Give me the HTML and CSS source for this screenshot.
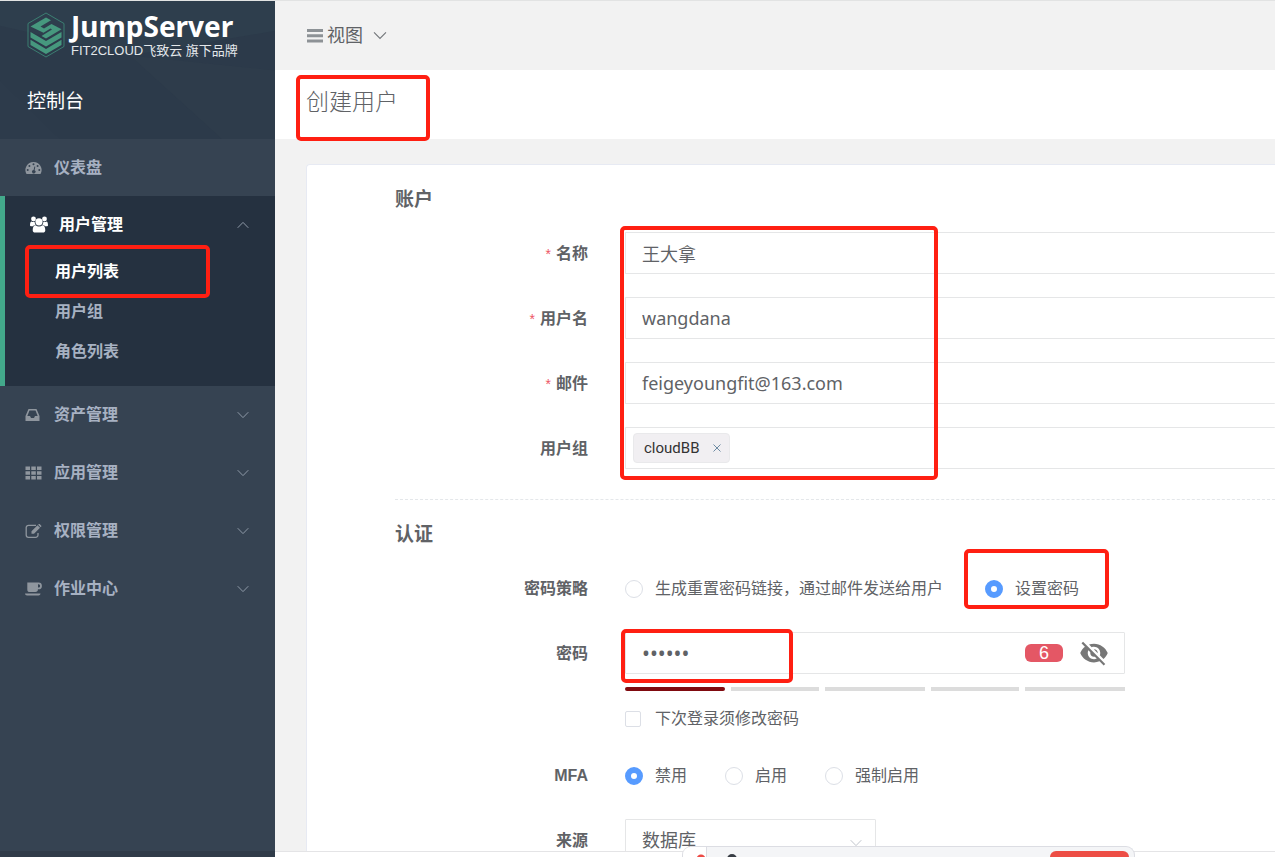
FILE: index.html
```html
<!DOCTYPE html>
<html lang="zh-CN">
<head>
<meta charset="utf-8">
<title>创建用户 - JumpServer</title>
<link rel="stylesheet" href="styles.css">
</head>
<body>
<svg class="symbols" aria-hidden="true">
  <symbol id="chevron" viewBox="0 0 12 8"><path d="M.7 1.2 6 6.6l5.300-5.400" fill="none" stroke="currentColor"/></symbol>
</svg>
<div class="app">
  <aside class="sidebar">
    <header class="brand">
      <svg class="facets" viewBox="0 0 275 139" preserveAspectRatio="none" aria-hidden="true">
        <path d="M0 0H275V30L130 55 0 25z" fill="#2e3e4d"/>
        <path d="M130 55 222 139H275V70z" fill="#2e3c4b"/>
        <path d="M0 80 60 139H0z" fill="#2d3b4b"/>
      </svg>
      <div class="logo">
        <svg class="logo-mark" viewBox="0 0 38 46" aria-hidden="true">
          <path d="M19 1 37 11.500V34.500L19 45 1 34.500V11.500z" fill="none" stroke="#3f8f7b" stroke-width=".8"/>
          <path d="M3.500 14.500 19 5.500 24 8.300 13.500 14.500 17 16.500 24.500 12 34.500 17.300 19 26.500 14.500 23.900 25 17.500 23.500 16.600 16.500 20.800z" fill="#46987e"/>
          <path d="M3.500 20v5.500L19 34.500 34.500 25.500V20L19 29z" fill="#46987e"/>
          <path d="M3.500 27.800V33L19 42 34.500 33V27.800L19 37z" fill="#46987e"/>
        </svg>
        <div class="logo-text">
          <strong>JumpServer</strong>
          <span>FIT2CLOUD飞致云 旗下品牌</span>
        </div>
      </div>
      <div class="console">控制台</div>
    </header>
    <nav>
      <a class="item first" href="#">
        <svg class="icon" viewBox="0 0 16 14"><path fill-rule="evenodd" d="M8 1a8 8 0 0 0-7 12h14A8 8 0 0 0 8 1zM8 2.200a1 1 0 1 1 0 2 1 1 0 0 1 0-2zM3.900 3.900a1 1 0 1 1 0 2 1 1 0 0 1 0-2zM12.100 3.900a1 1 0 1 1 0 2 1 1 0 0 1 0-2zM2.200 8a1 1 0 1 1 0 2 1 1 0 0 1 0-2zM13.800 8a1 1 0 1 1 0 2 1 1 0 0 1 0-2zM8.900 5.500l.9.200-.7 3.500a1.700 1.700 0 1 1-1-.2z"/></svg>
        <span>仪表盘</span>
      </a>
      <section class="group">
        <a class="item open" href="#">
          <svg class="icon" viewBox="0 0 18 17"><circle cx="3.500" cy="3" r="2.400"/><circle cx="14.500" cy="3" r="2.400"/><path d="M0 9.500C0 7 .6 5.600 1.500 5.600c1 .7 2.500.6 3.200.2 0 1.300.3 2.200 1 3-1 .1-2 .6-2.600 1.400H1.500C.6 10.200 0 10 0 9.500zM18 9.500c0-2.500-.6-3.900-1.500-3.900-1 .7-2.500.6-3.200.2 0 1.300-.3 2.200-1 3 1 .1 2 .6 2.600 1.400h1.600c.9 0 1.500-.2 1.500-.7z"/><circle cx="9" cy="5.800" r="3.600"/><path d="M2.700 14.200c0-3 .9-5 2.900-5 2 1.600 4.800 1.600 6.800 0 2 0 2.900 2 2.900 5 0 1.600-1 2.400-2.400 2.400H5.100c-1.400 0-2.400-.8-2.400-2.400z"/></svg>
          <span>用户管理</span>
          <svg class="chev up"><use href="#chevron"/></svg>
        </a>
        <a class="sub current" href="#">用户列表</a>
        <a class="sub" href="#">用户组</a>
        <a class="sub" href="#">角色列表</a>
      </section>
      <a class="item" href="#">
        <svg class="icon" viewBox="0 0 16 14"><path fill-rule="evenodd" d="M3 1h8l3 7v5H0V8zM4 2.600 1.800 8H4.500l1 2h3l1-2h2.700L10 2.600z"/></svg>
        <span>资产管理</span><svg class="chev"><use href="#chevron"/></svg>
      </a>
      <a class="item" href="#">
        <svg class="icon" viewBox="0 0 16 14"><path d="M0 .5h4.500v3.500H0zM5.800.5h4.500v3.500H5.800zM11.500.5H16v3.500h-4.500zM0 5.200h4.500v3.500H0zM5.800 5.200h4.500v3.500H5.800zM11.500 5.200H16v3.500h-4.500zM0 10h4.500v3.500H0zM5.800 10h4.500v3.500H5.800zM11.500 10H16v3.500h-4.500z"/></svg>
        <span>应用管理</span><svg class="chev"><use href="#chevron"/></svg>
      </a>
      <a class="item" href="#">
        <svg class="icon" viewBox="0 0 16 14"><path d="M10.500 1.300H3A2.300 2.300 0 0 0 .7 3.600V11A2.300 2.300 0 0 0 3 13.300h7.200A2.300 2.300 0 0 0 12.500 11V9" fill="none" stroke="currentColor" stroke-width="1.300"/><path d="M6 7.200 12 1.300l2.500 2.500-6 5.900H6zM12.600.8l.5-.5c.4-.4.9-.4 1.300 0l1.200 1.200c.4.400.4.900 0 1.300l-.5.5z"/></svg>
        <span>权限管理</span><svg class="chev"><use href="#chevron"/></svg>
      </a>
      <a class="item" href="#">
        <svg class="icon" viewBox="0 0 17 14"><path fill-rule="evenodd" d="M2.300.5h11.200a3.400 3.400 0 0 1 0 6.800h-.6A2.600 2.600 0 0 1 10.300 10H4.900A2.600 2.600 0 0 1 2.300 7.400zM13 2.300v3.300h.5a1.650 1.650 0 0 0 0-3.300zM0 11.500h15.500c0 1.200-1 2-2 2H2c-1 0-2-.8-2-2z"/></svg>
        <span>作业中心</span><svg class="chev"><use href="#chevron"/></svg>
      </a>
    </nav>
  </aside>

  <main class="main">
    <div class="topbar">
      <button class="view" type="button">
        <svg class="bars" viewBox="0 0 16 14"><path d="M0 0h16v3H0zM0 5.300h16v3H0zM0 10.600h16v3H0z"/></svg>
        <span>视图</span>
        <svg class="chev"><use href="#chevron"/></svg>
      </button>
    </div>
    <div class="page-title"><h1>创建用户</h1></div>
    <form class="card">
      <h2>账户</h2>
      <div class="row"><label class="label required" for="name">名称</label><input class="field" id="name" type="text" value="王大拿"></div>
      <div class="row"><label class="label required" for="username">用户名</label><input class="field" id="username" type="text" value="wangdana"></div>
      <div class="row"><label class="label required" for="email">邮件</label><input class="field" id="email" type="text" value="feigeyoungfit@163.com"></div>
      <div class="row"><span class="label">用户组</span>
        <div class="field tags"><span class="tag">cloudBB<button type="button" aria-label="移除"><svg viewBox="0 0 8 8"><path d="m.5.5 7 7m0-7-7 7" fill="none" stroke="currentColor"/></svg></button></span></div>
      </div>
      <hr>
      <h2>认证</h2>
      <div class="row"><span class="label">密码策略</span>
        <div class="options strategy">
          <label><input type="radio" name="strategy">生成重置密码链接，通过邮件发送给用户</label>
          <label><input type="radio" name="strategy" checked>设置密码</label>
        </div>
      </div>
      <div class="row password-row"><label class="label" for="password">密码</label>
        <div class="password">
          <div class="field password-box">
            <input id="password" type="password" value="secret">
            <span class="count">6</span>
            <button type="button" aria-label="显示密码"><svg viewBox="0 0 24 24"><path d="M12 7c2.760 0 5 2.240 5 5 0 .65-.13 1.260-.36 1.830l2.920 2.920c1.510-1.260 2.700-2.890 3.430-4.750-1.730-4.390-6-7.500-11-7.500-1.400 0-2.740.25-3.980.7l2.160 2.160C10.740 7.130 11.350 7 12 7zM2 4.270l2.280 2.280.46.46C3.080 8.300 1.780 10.020 1 12c1.730 4.390 6 7.500 11 7.500 1.550 0 3.030-.3 4.380-.84l.42.42L19.730 22 21 20.730 3.270 3 2 4.270zM7.530 9.800l1.550 1.550c-.05.21-.08.43-.08.65 0 1.660 1.340 3 3 3 .22 0 .44-.03.65-.08l1.550 1.550c-.67.33-1.410.53-2.200.53-2.760 0-5-2.240-5-5 0-.79.2-1.530.53-2.200zm4.310-.78l3.150 3.150.02-.16c0-1.660-1.340-3-3-3l-.17.01z"/></svg></button>
          </div>
          <div class="strength"><i class="on"></i><i></i><i></i><i></i><i></i></div>
          <div class="options"><label><input type="checkbox">下次登录须修改密码</label></div>
        </div>
      </div>
      <div class="row"><span class="label">MFA</span>
        <div class="options">
          <label><input type="radio" name="mfa" checked>禁用</label>
          <label><input type="radio" name="mfa">启用</label>
          <label><input type="radio" name="mfa">强制启用</label>
        </div>
      </div>
      <div class="row"><label class="label" for="source">来源</label>
        <div class="select"><select class="field" id="source"><option>数据库</option></select><svg class="chev"><use href="#chevron"/></svg></div>
      </div>
    </form>
  </main>

  <footer class="status">
    <div class="dock"><span class="dock-tab"></span><span class="dock-body"><i class="dot"></i><i class="action"></i></span></div>
  </footer>
</div>
<div class="mark mark-title"></div>
<div class="mark mark-menu"></div>
<div class="mark mark-account"></div>
<div class="mark mark-strategy"></div>
<div class="mark mark-password"></div>
</body>
</html>
```
FILE: styles.css
```css
* { box-sizing: border-box; }
body {
  margin: 0;
  color: #606266;
  font: 16px/24px "Liberation Sans", "Noto Sans CJK SC", sans-serif;
}
a { color: inherit; text-decoration: none; }
button { padding: 0; border: 0; background: none; color: inherit; font: inherit; }
.symbols { display: none; }
.app {
  display: grid;
  grid-template: minmax(0, 1fr) 6px / 275px minmax(0, 1fr);
  height: 100vh;
  overflow: hidden;
  border-top: 1px solid #e2e3e3;
}

/* sidebar */
.sidebar {
  overflow: hidden;
  background: #364352;
  color: #a7b1c2;
  font-weight: 700;
}
.brand {
  position: relative;
  height: 138px;
  padding: 11px 27px 0;
  background: #2c3a4a;
  color: #fff;
}
.facets { position: absolute; inset: 0; width: 100%; height: 100%; }
.logo { position: relative; display: flex; gap: 6px; height: 46px; }
.logo-mark { width: 38px; height: 46px; }
.logo-text { display: flex; flex-direction: column; white-space: nowrap; }
.logo-text strong { font: 700 28px/29px "Noto Sans", sans-serif; }
.logo-text span { font-weight: 400; font-size: 13px; line-height: 19px; color: #e3e7ea; }
.console { position: relative; margin-top: 30px; font-weight: 400; font-size: 19px; line-height: 28px; }
.item { display: flex; align-items: center; height: 58px; padding: 0 26px 0 25px; }
.first { height: 57px; padding-top: 1px; }
.icon { width: 17px; height: 14px; margin-right: 12px; fill: currentColor; color: #8f969e; }
.chev { width: 12px; height: 8px; margin-left: auto; color: #8f9aa8; }
.up { transform: rotate(180deg); }
.group {
  height: 190px;
  border-left: 5px solid #43a98b;
  background: #253140;
}
.open { height: 56px; padding-top: 1px; color: #fff; }
.open .icon { width: 18px; height: 17px; margin-right: 11px; color: #fff; }
.sub { display: block; padding-left: 50px; line-height: 40px; }
.current { color: #fff; }

/* content */
.main { overflow: hidden; background: #f2f2f2; }
.topbar { display: flex; height: 69px; padding-left: 32px; }
.view { display: flex; align-items: center; gap: 4px; font-size: 18px; }
.view .chev { margin-left: 6px; width: 14px; height: 9px; color: #73777b; }
.bars { width: 16px; height: 14px; fill: #8d9296; }
.page-title { height: 69px; padding: 16px 31px; background: #fff; }
h1 { margin: 0; font-weight: 300; font-size: 23px; line-height: 32px; }
.card {
  margin: 25px 0 0 31px;
  padding: 21px 0 40px 88px;
  border: solid #e7eaf3;
  border-width: 1px 0 0 1px;
  border-radius: 4px 0 0 0;
  background: #fff;
}
h2 { margin: 0 0 18px; font-size: 19px; line-height: 28px; }
hr { margin: 30px 0 21px; border: 0; border-top: 1px dashed #e4e7ea; }
.row {
  display: grid;
  grid-template-columns: 193px minmax(0, 1fr);
  column-gap: 37px;
  margin-bottom: 23px;
}
.label { height: 42px; text-align: right; font-weight: 700; line-height: 44px; }
.required::before { content: "*"; margin-right: 5px; color: #ed5565; font-weight: 400; font-size: 14px; }
.field {
  width: 100%;
  height: 42px;
  padding: 0 16px;
  border: 1px solid #e5e6e7;
  border-right: 0;
  border-radius: 1px;
  background: #fff;
  color: #606266;
  font: 18px "Noto Sans", "Noto Sans CJK SC", sans-serif;
}
.tags { display: flex; align-items: center; padding: 0 7px; }
.tag {
  display: flex;
  align-items: center;
  gap: 14px;
  height: 30px;
  padding: 0 8px 0 10px;
  border: 1px solid #e9e9eb;
  border-radius: 4px;
  background: #f1eff2;
  color: #333;
  font: 15px Roboto, sans-serif;
}
.tag svg { display: block; width: 8px; height: 8px; color: #6d8ba3; }
.options { display: flex; gap: 38px; height: 42px; padding-top: 1px; white-space: nowrap; }
.strategy { gap: 42px; }
.options label { display: flex; align-items: center; }
.options input {
  width: 18px;
  height: 18px;
  margin: 0 12px 0 0;
  border: 1px solid #dcdfe6;
  border-radius: 50%;
  background: #fff;
  appearance: none;
}
.options input:checked { border: 6px solid #579bff; }
.options input[type="checkbox"] { width: 16px; height: 16px; margin-right: 14px; border-radius: 2px; }
.password-row { margin-bottom: 15px; }
.password { max-width: 500px; }
.password-box { display: flex; align-items: center; padding-right: 15px; border-right: 1px solid #e5e6e7; }
.password-box input { flex: 1; min-width: 0; padding: 0; border: 0; color: inherit; font: inherit; font-size: 21px; }
.password-box svg { display: block; width: 30px; height: 30px; fill: #777; }
.count {
  width: 38px;
  margin-right: 16px;
  border-radius: 6px;
  background: #e45765;
  color: #fff;
  text-align: center;
  font: 18px/18px "Liberation Sans", sans-serif;
}
.strength { display: grid; grid-template-columns: 100fr 88fr 100fr 88fr 100fr; gap: 6px; margin: 13px 0 6px; }
.strength i { height: 4px; background: #dcdcdc; }
.strength .on { border-radius: 2px; background: #800a0f; }
.select { position: relative; max-width: 251px; }
.select .field { border-right: 1px solid #e5e6e7; appearance: none; }
.select .chev { position: absolute; right: 14px; top: 20px; color: #c0c4cc; }

/* bottom strip */
.status { position: relative; grid-column: 1 / -1; background: linear-gradient(90deg, #303b49 275px, #fff 275px); }
.status::before { content: ""; display: block; margin-left: 275px; border-top: 1px solid #e4e4e6; }
.dock {
  position: absolute;
  left: 682px;
  bottom: 0;
  display: flex;
  width: 453px;
  height: 11px;
  border: 1px solid #dcdde3;
  border-bottom: 0;
  border-radius: 9px 9px 0 0;
  background: #f4f5f7;
  overflow: hidden;
}
.dock-tab { width: 24px; border-right: 1px solid #dcdde3; background: radial-gradient(circle at 18px 12px, #ed4b46 4px, #fff 5px); }
.dock-body { display: flex; flex: 1; justify-content: space-between; padding: 4px 5px 0 20px; }
.dot { width: 10px; height: 10px; margin-top: 3px; border-radius: 50%; background: #383d45; }
.action { width: 79px; height: 12px; border-radius: 6px; background: #ed4d45; }

/* highlight frames */
.mark { position: absolute; border: 4px solid #ff1f12; border-radius: 5px; pointer-events: none; }
.mark-title { left: 296px; top: 75px; width: 134px; height: 66px; }
.mark-menu { left: 25px; top: 245px; width: 185px; height: 53px; }
.mark-account { left: 620px; top: 226px; width: 318px; height: 254px; }
.mark-strategy { left: 964px; top: 549px; width: 145px; height: 60px; }
.mark-password { left: 621px; top: 629px; width: 172px; height: 54px; }
```
